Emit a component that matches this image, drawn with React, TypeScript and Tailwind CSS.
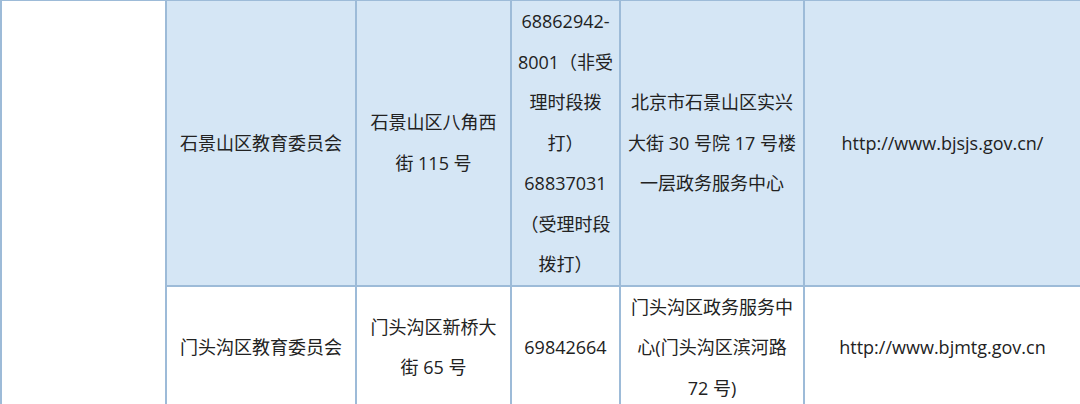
const rows = [
  {
    bg: "bg-[#d5e6f5]",
    height: "h-[284px]",
    name: ["石景山区教育委员会"],
    address: ["石景山区八角西", "街 115 号"],
    phone: [
      "68862942-",
      "8001（非受",
      "理时段拨",
      "打）",
      "68837031",
      "（受理时段",
      "拨打）",
    ],
    office: ["北京市石景山区实兴", "大街 30 号院 17 号楼", "一层政务服务中心"],
    site: ["http://www.bjsjs.gov.cn/"],
  },
  {
    bg: "bg-white",
    height: "h-[122px]",
    name: ["门头沟区教育委员会"],
    address: ["门头沟区新桥大", "街 65 号"],
    phone: ["69842664"],
    office: ["门头沟区政务服务中", "心(门头沟区滨河路", "72 号)"],
    site: ["http://www.bjmtg.gov.cn"],
  },
];

const Lines = ({ lines }: { lines: string[] }) => (
  <>
    {lines.map((line) => (
      <div key={line} className="whitespace-nowrap">
        {line}
      </div>
    ))}
  </>
);

const cell = "border-2 border-[#9dbbd8] p-0 text-center align-middle";

export default function App() {
  return (
    <div className="h-[404px] w-[1080px] overflow-hidden bg-white">
      <table
        className="-mt-px w-[1080px] table-fixed border-collapse text-[18px] leading-[40.5px] text-[#222]"
        style={{ fontFamily: '"Open Sans", "Noto Sans CJK SC", sans-serif' }}
      >
        <colgroup>
          <col className="w-[165px]" />
          <col className="w-[190px]" />
          <col className="w-[155px]" />
          <col className="w-[109px]" />
          <col className="w-[184px]" />
          <col className="w-[277px]" />
        </colgroup>
        <tbody>
          {rows.map((row, i) => (
            <tr key={row.name[0]} className={row.height}>
              {i === 0 && (
                <td rowSpan={2} className={`${cell} bg-white`} />
              )}
              <td className={`${cell} ${row.bg}`}>
                <Lines lines={row.name} />
              </td>
              <td className={`${cell} ${row.bg}`}>
                <Lines lines={row.address} />
              </td>
              <td className={`${cell} ${row.bg}`}>
                <Lines lines={row.phone} />
              </td>
              <td className={`${cell} ${row.bg}`}>
                <Lines lines={row.office} />
              </td>
              <td className={`${cell} ${row.bg}`}>
                <Lines lines={row.site} />
              </td>
            </tr>
          ))}
        </tbody>
      </table>
    </div>
  );
}
